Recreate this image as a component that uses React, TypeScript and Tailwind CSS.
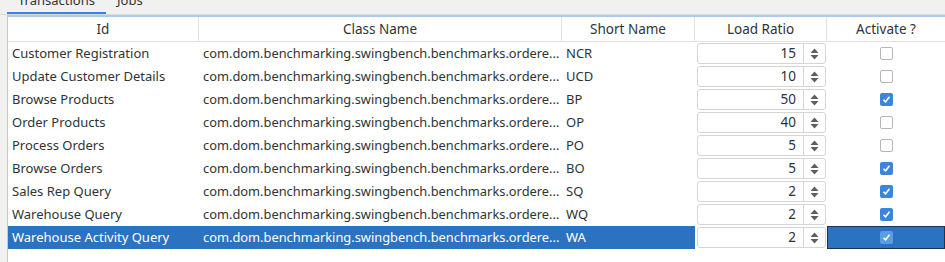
import React from 'react'

type Row = { id: string; short: string; ratio: number; active: boolean }

const rows: Row[] = [
  { id: 'Customer Registration', short: 'NCR', ratio: 15, active: false },
  { id: 'Update Customer Details', short: 'UCD', ratio: 10, active: false },
  { id: 'Browse Products', short: 'BP', ratio: 50, active: true },
  { id: 'Order Products', short: 'OP', ratio: 40, active: false },
  { id: 'Process Orders', short: 'PO', ratio: 5, active: false },
  { id: 'Browse Orders', short: 'BO', ratio: 5, active: true },
  { id: 'Sales Rep Query', short: 'SQ', ratio: 2, active: true },
  { id: 'Warehouse Query', short: 'WQ', ratio: 2, active: true },
  { id: 'Warehouse Activity Query', short: 'WA', ratio: 2, active: true },
]

const cls = 'com.dom.benchmarking.swingbench.benchmarks.ordere...'

function Check({ on, sel }: { on: boolean; sel?: boolean }) {
  if (!on)
    return <div className="w-[13px] h-[13px] rounded-[2px] border border-[#b6b6b3] bg-white" />
  return (
    <div
      className={`w-[13px] h-[13px] rounded-[2px] flex items-center justify-center ${
        sel ? 'bg-[#5a9de6]' : 'bg-[#3b86dc]'
      }`}
    >
      <svg width="9" height="9" viewBox="0 0 9 9">
        <path d="M1.5 4.8 L3.6 6.8 L7.5 1.8" stroke="white" strokeWidth="1.6" fill="none" />
      </svg>
    </div>
  )
}

function Spinner({ value }: { value: number }) {
  return (
    <div className="h-[21px] w-[129px] ml-[2px] flex rounded-[3px] border border-[#d5d5d3] bg-white text-[#2e3436] text-[13.5px]">
      <div className="flex-1 flex items-center justify-end pr-[7px]">{value}</div>
      <div className="w-[22px] border-l border-[#d5d5d3] flex items-center justify-center">
        <svg width="9" height="12" viewBox="0 0 9 12">
          <path d="M4.5 0.5 L8.5 5 L0.5 5 Z" fill="#5e5e5e" />
          <path d="M4.5 11.5 L8.5 7 L0.5 7 Z" fill="#5e5e5e" />
        </svg>
      </div>
    </div>
  )
}

export default function App() {
  return (
    <div
      className="w-[945px] h-[262px] bg-[#f1f1f0] overflow-hidden text-[13px] text-[#2e3436]"
      style={{ fontFamily: '"Noto Sans", sans-serif' }}
    >
      <div className="h-[15px] overflow-hidden flex border-b border-[#dcdcda]">
        <div className="ml-[7px] w-[99px] h-[14px] border-b-2 border-[#3584e4] flex justify-center">
          <span className="-mt-[10px] leading-[20px]">Transactions</span>
        </div>
        <div className="ml-[11px] h-[14px] flex">
          <span className="-mt-[10px] leading-[20px]">Jobs</span>
        </div>
      </div>
      <div className="ml-[7px] h-[247px] bg-white border-l border-[#c9c9c7] border-t-2 border-t-[#a9cbed]">
        <div className="grid grid-cols-[191px_363px_133px_132px_1fr] h-[25px] border-b border-[#e2e2e0] text-[13.5px]">
          <div className="flex items-center justify-center border-r border-[#e2e2e0]">Id</div>
          <div className="flex items-center justify-center border-r border-[#e2e2e0]">Class Name</div>
          <div className="flex items-center justify-center border-r border-[#e2e2e0]">Short Name</div>
          <div className="flex items-center justify-center border-r border-[#e2e2e0]">Load Ratio</div>
          <div className="flex items-center justify-center">Activate ?</div>
        </div>
        {rows.map((r, i) => {
          const sel = i === rows.length - 1
          const cell = sel ? 'bg-[#2b73c0] text-white' : ''
          return (
            <div key={r.id} className="grid grid-cols-[191px_363px_133px_132px_1fr] h-[23px]">
              <div className={`flex items-center pl-[4px] whitespace-nowrap overflow-hidden ${cell}`}>{r.id}</div>
              <div className={`flex items-center pl-[4px] whitespace-nowrap overflow-hidden text-[12.85px] ${cell}`}>
                {cls}
              </div>
              <div className={`flex items-center pl-[4px] ${cell}`}>{r.short}</div>
              <div className="flex items-center">
                <Spinner value={r.ratio} />
              </div>
              <div
                className={`flex items-center justify-center ${
                  sel ? 'bg-[#2b73c0] border border-[#1b3550]' : ''
                }`}
              >
                <Check on={r.active} sel={sel} />
              </div>
            </div>
          )
        })}
      </div>
    </div>
  )
}
